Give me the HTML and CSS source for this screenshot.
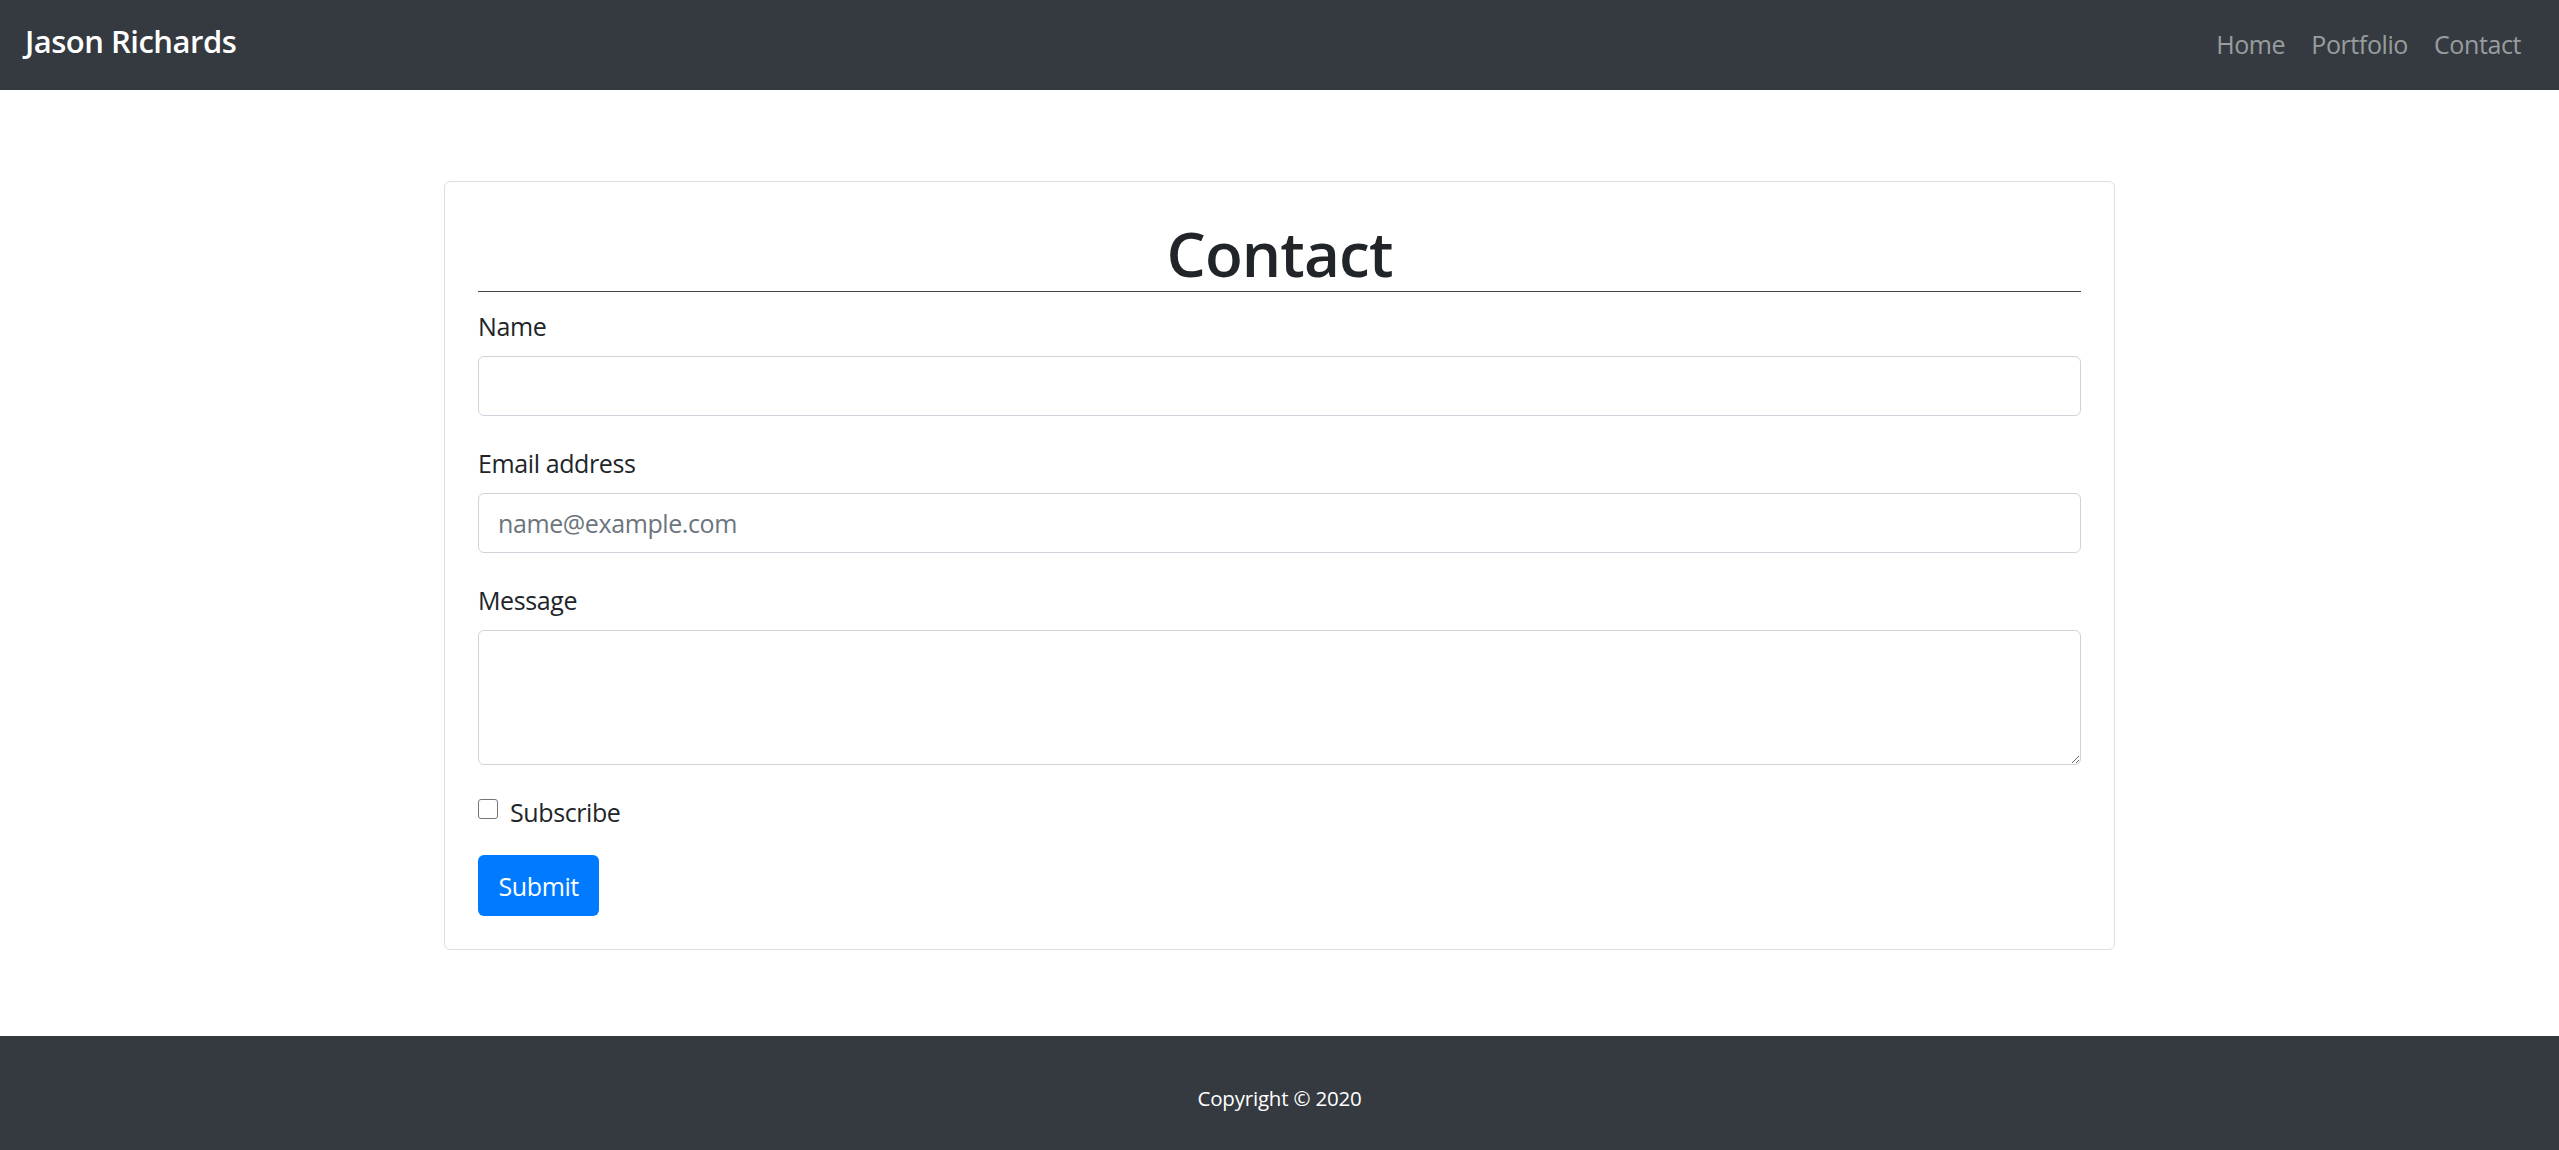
FILE: index.html
```html
<!DOCTYPE html>
<html lang="en">
<head>
<meta charset="utf-8">
<title>Contact - Jason Richards</title>
<link rel="stylesheet" href="styles.css">
</head>
<body>
<nav class="navbar">
  <a class="brand" href="#">Jason Richards</a>
  <ul class="nav">
    <li><a href="#">Home</a></li>
    <li><a href="#">Portfolio</a></li>
    <li><a href="#">Contact</a></li>
  </ul>
</nav>
<main class="main">
  <div class="card">
    <h1 class="title">Contact</h1>
    <form class="form">
      <div class="group">
        <label class="label" for="name">Name</label>
        <input class="control" id="name" type="text">
      </div>
      <div class="group">
        <label class="label" for="email">Email address</label>
        <input class="control" id="email" type="email" placeholder="name@example.com">
      </div>
      <div class="group">
        <label class="label" for="msg">Message</label>
        <textarea class="control area" id="msg"></textarea>
      </div>
      <div class="check">
        <input class="check-input" id="sub" type="checkbox">
        <label class="check-label" for="sub">Subscribe</label>
      </div>
      <button class="btn" type="button">Submit</button>
    </form>
  </div>
</main>
<footer class="footer">
  <p class="copy">Copyright © 2020</p>
</footer>
</body>
</html>
```

FILE: styles.css
```css
* { box-sizing: border-box; }
html, body { margin: 0; padding: 0; }
body {
  font-family: "Open Sans", "Noto Sans", sans-serif;
  color: #212529;
  background: #fff;
  font-size: 25px;
  letter-spacing: -0.4px;
}
a { text-decoration: none; }

.navbar {
  height: 90px;
  background: #343a40;
  display: flex;
  align-items: center;
  justify-content: space-between;
  padding: 0 25px 0 25px;
}
.brand {
  color: #fff;
  font-size: 31px;
  font-weight: 600;
  line-height: 1;
  margin-top: -7px;
  letter-spacing: -0.5px;
}
.nav {
  list-style: none;
  margin: 0;
  padding: 0;
  display: flex;
}
.nav a {
  display: block;
  padding: 0 13px;
  color: rgba(255,255,255,.5);
  font-size: 25px;
  line-height: 39px;
  margin-top: -2px;
}

.main {
  padding: 91px 0 86px;
  display: flex;
  justify-content: center;
}
.card {
  width: 1671px;
  border: 1px solid #dfdfdf;
  border-radius: 6px;
  padding: 33px;
}
.title {
  margin: 0 0 13px;
  font-size: 62px;
  font-weight: 600;
  line-height: 76px;
  text-align: center;
  border-bottom: 1px solid #454545;
  letter-spacing: -0.9px;
}
.form { display: flex; flex-direction: column; align-items: flex-start; }
.group { width: 100%; margin-bottom: 26px; }
.label {
  display: block;
  line-height: 39px;
  padding-top: 2px;
  margin-bottom: 10px;
}
.control {
  display: block;
  width: 100%;
  height: 60px;
  border: 1px solid #ced4da;
  border-radius: 6px;
  padding: 0 19px;
  font-family: inherit;
  font-size: 25px;
  letter-spacing: -0.4px;
  color: #495057;
  background: #fff;
}
.control::placeholder { color: #6c757d; opacity: 1; }
.area {
  height: 135px;
  padding: 10px 19px;
  resize: vertical;
}
.check {
  display: flex;
  align-items: flex-start;
  margin-bottom: 23px;
  line-height: 39px;
}
.check-label { padding-top: 2px; }
.check-input {
  appearance: none;
  -webkit-appearance: none;
  width: 20px;
  height: 20px;
  margin: 8px 12px 0 0;
  border: 1px solid #767676;
  border-radius: 3px;
  background: #fff;
}
.btn {
  height: 61px;
  padding: 0 20.5px;
  border: none;
  border-radius: 6px;
  background: #007bff;
  color: #fff;
  font-family: inherit;
  font-size: 25px;
  letter-spacing: -0.4px;
}

.footer {
  background: #343a40;
  height: 114px;
  padding-top: 47px;
}
.copy {
  margin: 0;
  text-align: center;
  color: #fff;
  font-size: 20.5px;
  line-height: 30px;
  letter-spacing: -0.2px;
}
```
